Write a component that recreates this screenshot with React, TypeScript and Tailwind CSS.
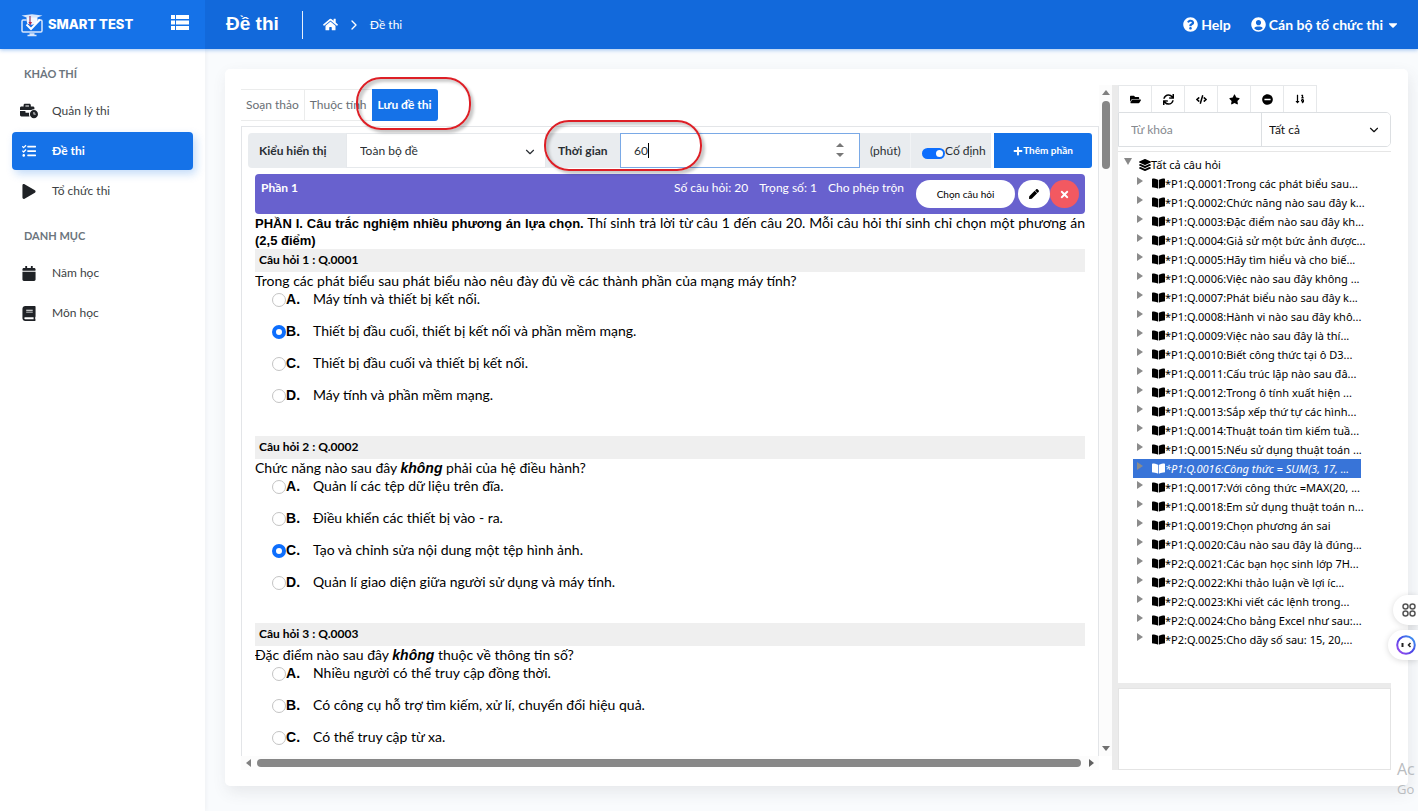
import React from 'react';
import {
  FaBook,
  FaBookOpen,
  FaBusinessTime,
  FaCalendar,
  FaCaretDown,
  FaCode,
  FaFolderOpen,
  FaHome,
  FaLayerGroup,
  FaMinusCircle,
  FaPen,
  FaPlay,
  FaPlus,
  FaQuestionCircle,
  FaSortNumericDown,
  FaStar,
  FaSync,
  FaTasks,
  FaTimes,
  FaUserCircle,
} from 'react-icons/fa';
import { ChevronDown, ChevronRight } from 'lucide-react';

type Question = {
  code: string;
  before: string;
  strong?: string;
  after?: string;
  options: string[];
  answer?: number;
};

const questions: Question[] = [
  {
    code: 'Q.0001',
    before: 'Trong các phát biểu sau phát biểu nào nêu đày đủ về các thành phần của mạng máy tính?',
    options: [
      'Máy tính và thiết bị kết nối.',
      'Thiết bị đầu cuối, thiết bị kết nối và phần mềm mạng.',
      'Thiết bị đầu cuối và thiết bị kết nối.',
      'Máy tính và phần mềm mạng.',
    ],
    answer: 1,
  },
  {
    code: 'Q.0002',
    before: 'Chức năng nào sau đây ',
    strong: 'không',
    after: ' phải của hệ điều hành?',
    options: [
      'Quản lí các tệp dữ liệu trên đĩa.',
      'Điều khiển các thiết bị vào - ra.',
      'Tạo và chỉnh sửa nội dung một tệp hình ảnh.',
      'Quản lí giao diện giữa người sử dụng và máy tính.',
    ],
    answer: 2,
  },
  {
    code: 'Q.0003',
    before: 'Đặc điểm nào sau đây ',
    strong: 'không',
    after: ' thuộc về thông tin số?',
    options: [
      'Nhiều người có thể truy cập đồng thời.',
      'Có công cụ hỗ trợ tìm kiếm, xử lí, chuyển đổi hiệu quả.',
      'Có thể truy cập từ xa.',
    ],
  },
];

const tree = [
  '*P1:Q.0001:Trong các phát biểu sau...',
  '*P1:Q.0002:Chức năng nào sau đây k...',
  '*P1:Q.0003:Đặc điểm nào sau đây kh...',
  '*P1:Q.0004:Giả sử một bức ảnh được...',
  '*P1:Q.0005:Hãy tìm hiểu và cho biế...',
  '*P1:Q.0006:Việc nào sau đây không ...',
  '*P1:Q.0007:Phát biểu nào sau đây k...',
  '*P1:Q.0008:Hành vi nào sau đây khô...',
  '*P1:Q.0009:Việc nào sau đây là thí...',
  '*P1:Q.0010:Biết công thức tại ô D3...',
  '*P1:Q.0011:Cấu trúc lặp nào sau đâ...',
  '*P1:Q.0012:Trong ô tính xuất hiện ...',
  '*P1:Q.0013:Sắp xếp thứ tự các hình...',
  '*P1:Q.0014:Thuật toán tìm kiếm tuầ...',
  '*P1:Q.0015:Nếu sử dụng thuật toán ...',
  '*P1:Q.0016:Công thức = SUM(3, 17, ...',
  '*P1:Q.0017:Với công thức =MAX(20, ...',
  '*P1:Q.0018:Em sử dụng thuật toán n...',
  '*P1:Q.0019:Chọn phương án sai',
  '*P1:Q.0020:Câu nào sau đây là đúng...',
  '*P2:Q.0021:Các bạn học sinh lớp 7H...',
  '*P2:Q.0022:Khi thảo luận về lợi íc...',
  '*P2:Q.0023:Khi viết các lệnh trong...',
  '*P2:Q.0024:Cho bảng Excel như sau:...',
  '*P2:Q.0025:Cho dãy số sau: 15, 20,...',
];

const SELECTED = 15;

const tools = [
  { label: 'Mở thư mục', icon: <FaFolderOpen /> },
  { label: 'Tải lại', icon: <FaSync /> },
  { label: 'Mã nguồn', icon: <FaCode /> },
  { label: 'Đánh dấu', icon: <FaStar /> },
  { label: 'Thu gọn', icon: <FaMinusCircle /> },
  { label: 'Sắp xếp', icon: <FaSortNumericDown size={10} /> },
];

function Logo() {
  return (
    <svg viewBox="0 0 24 24" className="h-6 w-6 shrink-0" fill="none">
      <path d="M1.500 2.500 12 1.200l10.500 1.300L17.500 4.500v4h-11v-4z" fill="#d7e6fb" />
      <path d="M6.500 7H3.200A1.200 1.200 0 0 0 2 8.200v9.600A1.200 1.200 0 0 0 3.200 19h17.600a1.200 1.200 0 0 0 1.200-1.200V8.200A1.200 1.200 0 0 0 20.800 7h-3.300" stroke="#d7e6fb" strokeWidth="1.500" />
      <path d="M7 4.500h10v6c-3 1.500-7 1.500-10 0z" fill="#f4f8ff" />
      <path d="M10 3v7" stroke="#8d3560" strokeWidth="1.200" />
      <path d="m8.500 9 1.700 3.500L12 9z" fill="#b52a4a" />
      <path d="m6.500 11.500 4.500 4.500 9-9.500" stroke="#fff" strokeWidth="2" />
      <path d="M9.500 21h5M7.500 22.500h9" stroke="#d7e6fb" strokeWidth="1.500" />
    </svg>
  );
}

function MenuIcon() {
  return (
    <svg viewBox="0 0 18 15" className="h-[15px] w-[18px]" fill="currentColor">
      <path d="M0 0h4v4H0zM5 0h13v4H5zM0 5.500h4v4H0zM5 5.500h13v4H5zM0 11h4v4H0zM5 11h13v4H5z" />
    </svg>
  );
}

function NavItem({ icon, label, active }: { icon: React.ReactNode; label: string; active?: boolean }) {
  return (
    <a
      href="#"
      className={
        active
          ? 'mx-3 flex h-[38px] items-center gap-4 rounded-[4px] bg-[#1572e8] pl-[10px] text-[12px] font-bold text-white shadow-[3px_4px_8px_rgba(21,114,232,0.25)]'
          : 'mx-3 flex h-[38px] items-center gap-4 pl-[10px] text-[12px] text-[#3c3f44]'
      }
    >
      <span className={active ? 'flex w-[14px] justify-center text-[16px]' : 'flex w-[14px] justify-center text-[15px] text-[#1f2226]'}>{icon}</span>
      <span>{label}</span>
    </a>
  );
}

function QuestionBlock({ q, index }: { q: Question; index: number }) {
  return (
    <section className="mb-[18px]">
      <h3 className="h-[23px] bg-[#efefef] pl-1 text-[12px] font-bold leading-[22px]">
        Câu hỏi {index + 1} : {q.code}
      </h3>
      <p className="text-[14px] leading-[18px]">
        {q.before}
        {q.strong && <b className="font-['Liberation_Sans',sans-serif] text-[14px] italic leading-none">{q.strong}</b>}
        {q.after}
      </p>
      {q.options.map((text, i) => (
        <label key={text} className="flex h-8 items-start pl-[17px] text-[14px] leading-[18px]">
          <input
            type="radio"
            name={q.code}
            defaultChecked={q.answer === i}
            className="mt-[3px] size-[14px] shrink-0 appearance-none rounded-full border border-[#c4c4c4] bg-white checked:border-[4px] checked:border-[#0d6efd]"
          />
          <b className="w-[27px] shrink-0 font-['Liberation_Sans',sans-serif] text-[14px]">{'ABCD'[i]}.</b>
          <span className="whitespace-nowrap">{text}</span>
        </label>
      ))}
    </section>
  );
}

function Ring({ className }: { className: string }) {
  return (
    <span
      aria-hidden="true"
      className={
        'pointer-events-none absolute z-10 rounded-[25px] border-2 border-[#dd1f26] shadow-[3px_3px_3px_rgba(0,0,0,0.22),inset_3px_3px_3px_rgba(0,0,0,0.2)] ' +
        className
      }
    />
  );
}

export default function App() {
  return (
    <div className="relative flex h-screen flex-col overflow-hidden bg-[#f9fbfd] font-['Lato','Liberation_Sans',sans-serif] text-[#111]">
      <header className="z-10 flex h-[49px] shrink-0 bg-[#1269db] text-white shadow-[0_1px_4px_rgba(18,105,219,0.4)]">
        <div className="flex w-[205px] shrink-0 items-center bg-[#1572e8] pl-5 pr-4">
          <Logo />
          <span className="ml-1 whitespace-nowrap font-['Inter',sans-serif] text-[13px] font-extrabold">SMART TEST</span>
          <button aria-label="Menu" className="mb-1 ml-auto">
            <MenuIcon />
          </button>
        </div>
        <div className="flex flex-1 items-center pl-[21px] pr-[18px]">
          <h1 className="font-['Liberation_Sans',sans-serif] text-[19px] font-bold">Đề thi</h1>
          <nav className="ml-[23px] flex items-center border-l border-white/90 py-1 pl-5 text-[12px] leading-5">
            <a href="#" aria-label="Trang chủ" className="text-[15px]">
              <FaHome />
            </a>
            <ChevronRight size={16} className="mx-2" strokeWidth={2} />
            <a href="#">Đề thi</a>
          </nav>
          <div className="ml-auto flex items-center gap-5 text-[14px] font-bold">
            <a href="#" className="flex items-center gap-[3px]">
              <FaQuestionCircle size={15} />
              Help
            </a>
            <button className="flex items-center gap-[3px]">
              <FaUserCircle size={15} />
              Cán bộ tổ chức thi
              <FaCaretDown />
            </button>
          </div>
        </div>
      </header>

      <div className="flex min-h-0 flex-1">
        <aside className="w-[205px] shrink-0 bg-white pt-[15px] shadow-[1px_0_4px_rgba(69,65,78,0.06)]">
          <h2 className="pl-6 text-[11px] font-bold leading-[20px] text-[#6c757d]">KHẢO THÍ</h2>
          <div className="mt-2 flex flex-col gap-[2px]">
            <NavItem icon={<FaBusinessTime size={18} className="shrink-0" />} label="Quản lý thi" />
            <NavItem icon={<FaTasks />} label="Đề thi" active />
            <NavItem icon={<FaPlay />} label="Tổ chức thi" />
          </div>
          <h2 className="mt-4 pl-6 text-[11px] font-bold leading-[20px] text-[#6c757d]">DANH MỤC</h2>
          <div className="mt-2 flex flex-col gap-[2px]">
            <NavItem icon={<FaCalendar />} label="Năm học" />
            <NavItem icon={<FaBook />} label="Môn học" />
          </div>
        </aside>

        <main className="flex min-w-0 flex-1 pb-[25px] pl-5 pr-[10px] pt-5">
          <div className="flex min-w-0 flex-1 rounded-[5px] bg-white pb-4 pl-4 pr-[17px] pt-4 shadow-[2px_6px_15px_rgba(69,65,78,0.1)]">
            {/* Editor pane */}
            <div className="flex min-w-0 flex-1 flex-col">
              <div className="flex min-h-0 flex-1">
                <div className="flex min-w-0 flex-1 flex-col pt-1">
                  <div className="flex h-8 items-stretch self-start text-[12px] text-[#6a6f75]">
                    <button className="border-y border-r border-[#ebecec] px-[5px]">Soạn thảo</button>
                    <button className="border-y border-[#ebecec] px-[5px]">Thuộc tính</button>
                    <div className="relative flex">
                      <button className="rounded-r-[3px] bg-[#1572e8] px-[6px] font-bold text-white">Lưu đề thi</button>
                      <Ring className="-left-4 -right-[33px] -top-3 h-[53px]" />
                    </div>
                  </div>

                  <div className="mt-[5px] flex min-h-0 flex-1 flex-col border-x border-t border-[#e3e5e8] px-[6px] pt-[6px]">
                    <div className="flex h-[35px] shrink-0 text-[12px] text-[#2a2f34]">
                      <label htmlFor="mode" className="flex w-[98px] items-center rounded-l-[4px] bg-[#e9ecef] pl-[11px] font-bold">
                        Kiểu hiển thị
                      </label>
                      <div className="relative flex w-[200px]">
                        <select id="mode" className="w-full appearance-none border border-[#e6e9ec] bg-white pl-[13px] text-[12px]">
                          <option>Toàn bộ đề</option>
                        </select>
                        <ChevronDown size={14} className="pointer-events-none absolute right-[9px] top-3" />
                      </div>
                      <div className="relative flex">
                        <label htmlFor="time" className="flex w-[74px] items-center bg-[#e9ecef] pl-3 font-bold">
                          Thời gian
                        </label>
                        <Ring className="-left-[2px] -right-[82px] -top-[13px] h-[51px]" />
                      </div>
                      <div className="relative flex min-w-0 flex-1">
                        <input id="time" type="text" inputMode="numeric" defaultValue="60" className="w-full min-w-0 border border-[#7aa9e6] bg-white pl-[13px] text-[12px] outline-none" />
                        <span className="absolute left-7 top-[10px] h-[15px] w-px bg-black" />
                        <svg viewBox="0 0 8 14" className="absolute right-4 top-[10px] h-[14px] w-2" fill="#777">
                          <path d="M0 4 4 0l4 4zM0 10l4 4 4-4z" />
                        </svg>
                      </div>
                      <span className="flex w-[51px] items-center border-r border-[#f1f3f5] bg-[#e9ecef] pl-[10px]">(phút)</span>
                      <label className="flex w-[80px] items-center bg-[#e9ecef] pl-[11px]">
                        <input
                          type="checkbox"
                          role="switch"
                          defaultChecked
                          className="relative mt-[5px] h-[11px] w-[23px] shrink-0 appearance-none rounded-full bg-[#0d6efd] after:absolute after:right-[2px] after:top-[2px] after:size-[7px] after:rounded-full after:bg-white"
                        />
                        <span className="whitespace-nowrap">Cố định</span>
                      </label>
                      <button className="ml-[3px] flex w-[98px] items-center justify-center rounded-r-[3px] bg-[#1572e8] text-[10px] font-bold text-white">
                        <FaPlus />
                        Thêm phần
                      </button>
                    </div>

                    <div className="mx-[7px] mt-[6px] flex h-10 shrink-0 items-start rounded-[4px] bg-[#6861ce] pl-[6px] pr-[6px] text-[12px] text-white">
                      <h2 className="pt-[5px] text-[12px] font-bold leading-[18px]">Phần 1</h2>
                      <div className="ml-auto flex gap-[11px] pt-[5px] leading-[18px]">
                        <span>Số câu hỏi: 20</span>
                        <span>Trọng số: 1</span>
                        <span>Cho phép trộn</span>
                      </div>
                      <button className="ml-3 mt-[6px] h-7 w-[99px] rounded-full bg-white text-[10px] text-black">Chọn câu hỏi</button>
                      <button aria-label="Sửa" className="ml-[3px] mt-[6px] flex h-7 w-8 items-center justify-center rounded-full bg-white text-[10px] text-black">
                        <FaPen />
                      </button>
                      <button aria-label="Xóa" className="mt-[6px] flex h-7 w-[29px] items-center justify-center rounded-full bg-[#f25961] text-[11px]">
                        <FaTimes />
                      </button>
                    </div>

                    <div className="mx-[7px] min-h-0 flex-1 overflow-hidden text-black">
                      <p className="mb-[1px] text-justify text-[14px] leading-[17px]">
                        <b className="font-['Liberation_Sans',sans-serif] text-[13px] leading-none">PHẦN I. Câu trắc nghiệm nhiều phương án lựa chọn.</b> Thí sinh trả lời từ câu 1 đến câu 20. Mỗi câu hỏi thí sinh chỉ chọn một phương án{' '}
                        <b className="font-['Liberation_Sans',sans-serif] text-[13px] leading-none">(2,5 điểm)</b>
                      </p>
                      {questions.map((q, i) => (
                        <QuestionBlock key={q.code} q={q} index={i} />
                      ))}
                    </div>
                  </div>
                </div>

                <div className="flex w-[13px] shrink-0 flex-col items-center bg-[#fcfcfc] py-[5px]" aria-hidden="true">
                  <svg viewBox="0 0 8 5" className="h-[5px] w-2" fill="#808080">
                    <path d="M0 5 4 0l4 5z" />
                  </svg>
                  <span className="mt-[6px] h-[68px] w-2 rounded-full bg-[#868686]" />
                  <svg viewBox="0 0 8 5" className="mt-auto h-[5px] w-2" fill="#707070">
                    <path d="m0 0 4 5 4-5z" />
                  </svg>
                </div>
              </div>

              <div className="mr-[13px] flex h-[14px] shrink-0 items-center gap-[6px] bg-[#fcfcfc] px-[5px]" aria-hidden="true">
                <svg viewBox="0 0 5 8" className="h-2 w-[5px] shrink-0" fill="#808080">
                  <path d="M5 0 0 4l5 4z" />
                </svg>
                <span className="mr-[2px] h-2 flex-1 rounded-full bg-[#868686]" />
                <svg viewBox="0 0 5 8" className="h-2 w-[5px] shrink-0" fill="#606060">
                  <path d="m0 0 5 4-5 4z" />
                </svg>
              </div>
            </div>

            <div className="w-[6px] shrink-0 bg-[#ebebeb]" />

            {/* Question bank pane */}
            <div className="flex w-[273px] shrink-0 flex-col">
              <div className="flex h-[27px] self-start border-l border-t border-[#e6e8ea] text-[11px] text-black">
                {tools.map((t) => (
                  <button key={t.label} aria-label={t.label} className="flex w-[33px] items-center justify-center border-r border-[#e6e8ea]">
                    {t.icon}
                  </button>
                ))}
              </div>
              <div className="flex h-[35px] shrink-0 overflow-hidden rounded-r-[5px] border border-[#dcdfe2] text-[12px]">
                <input aria-label="Từ khóa" placeholder="Từ khóa" className="w-[143px] border-r border-[#dcdfe2] pl-3 outline-none placeholder:text-[#868a8f]" />
                <div className="relative flex flex-1">
                  <select aria-label="Loại câu hỏi" className="w-full appearance-none bg-white pl-[7px]">
                    <option>Tất cả</option>
                  </select>
                  <ChevronDown size={14} className="pointer-events-none absolute right-[9px] top-[10px]" />
                </div>
              </div>
              <div className="mt-1 min-h-0 flex-1 overflow-hidden border-t border-[#e6e6e6] pt-[3px] font-['Noto_Sans',sans-serif] text-[11px] leading-[19px] text-black">
                <div className="flex h-[19px] items-center pl-[6px]">
                  <svg viewBox="0 0 8 7" className="mb-[6px] mr-[7px] h-[7px] w-2" fill="#888">
                    <path d="M0 0h8L4 7z" />
                  </svg>
                  <FaLayerGroup size={12} className="shrink-0" />
                  <span>Tất cả câu hỏi</span>
                </div>
                <ul>
                  {tree.map((text, i) => (
                    <li
                      key={text}
                      className={
                        i === SELECTED
                          ? 'ml-[15px] mr-[30px] flex h-[19px] items-center bg-[#3874d8] pl-1 italic text-white'
                          : 'ml-[15px] mr-[30px] flex h-[19px] items-center pl-1'
                      }
                    >
                      <svg viewBox="0 0 6 8" className="mb-[5px] mr-[9px] h-2 w-[6px] shrink-0" fill="#8b8b8b">
                        <path d="m0 0 6 4-6 4z" />
                      </svg>
                      <FaBookOpen size={13} className="shrink-0" />
                      <span className="whitespace-nowrap">{text}</span>
                    </li>
                  ))}
                </ul>
              </div>
              <div className="h-[5px] shrink-0 bg-[#ebebeb]" />
              <div className="h-[82px] shrink-0 border border-[#e4e4e4]" />
            </div>
          </div>
        </main>
      </div>

      <div className="absolute right-0 top-[595px] z-20 flex flex-col items-end gap-[5px]">
        <button aria-label="Tiện ích" className="flex h-[30px] w-[25px] items-center justify-end rounded-l-full bg-white pr-[2px] shadow-[0_1px_6px_rgba(0,0,0,0.15)]">
          <svg viewBox="0 0 14 14" className="h-[14px] w-[14px]" fill="none" stroke="#555" strokeWidth="1.500">
            <circle cx="3.500" cy="3.500" r="2.500" />
            <circle cx="10.500" cy="3.500" r="2.500" />
            <circle cx="3.500" cy="10.500" r="2.500" />
            <circle cx="10.500" cy="10.500" r="2.500" />
          </svg>
        </button>
        <button aria-label="Trợ lý" className="flex h-[30px] w-[30px] items-center justify-end rounded-l-full bg-white pr-[2px] shadow-[0_1px_6px_rgba(0,0,0,0.15)]">
          <svg viewBox="0 0 20 20" className="h-5 w-5" fill="none">
            <defs>
              <linearGradient id="bot" x1="0" y1="1" x2="1" y2="0">
                <stop offset="0" stopColor="#a54bf0" />
                <stop offset="0.500" stopColor="#4a45e6" />
                <stop offset="1" stopColor="#3ba3f2" />
              </linearGradient>
            </defs>
            <circle cx="10" cy="10" r="8.800" stroke="url(#bot)" strokeWidth="2" />
            <path d="M6.500 8v4" stroke="#222" strokeWidth="2" />
            <path d="m14.500 8-2 2 2 2" stroke="#222" strokeWidth="1.500" />
          </svg>
        </button>
      </div>
      <div className="pointer-events-none absolute bottom-[12px] right-0 z-20 w-[21px] font-['Open_Sans',sans-serif] text-[#b9bcc0]">
        <p className="text-[16px] leading-5">Ac</p>
        <p className="text-[13px] leading-5">Go</p>
      </div>
    </div>
  );
}
